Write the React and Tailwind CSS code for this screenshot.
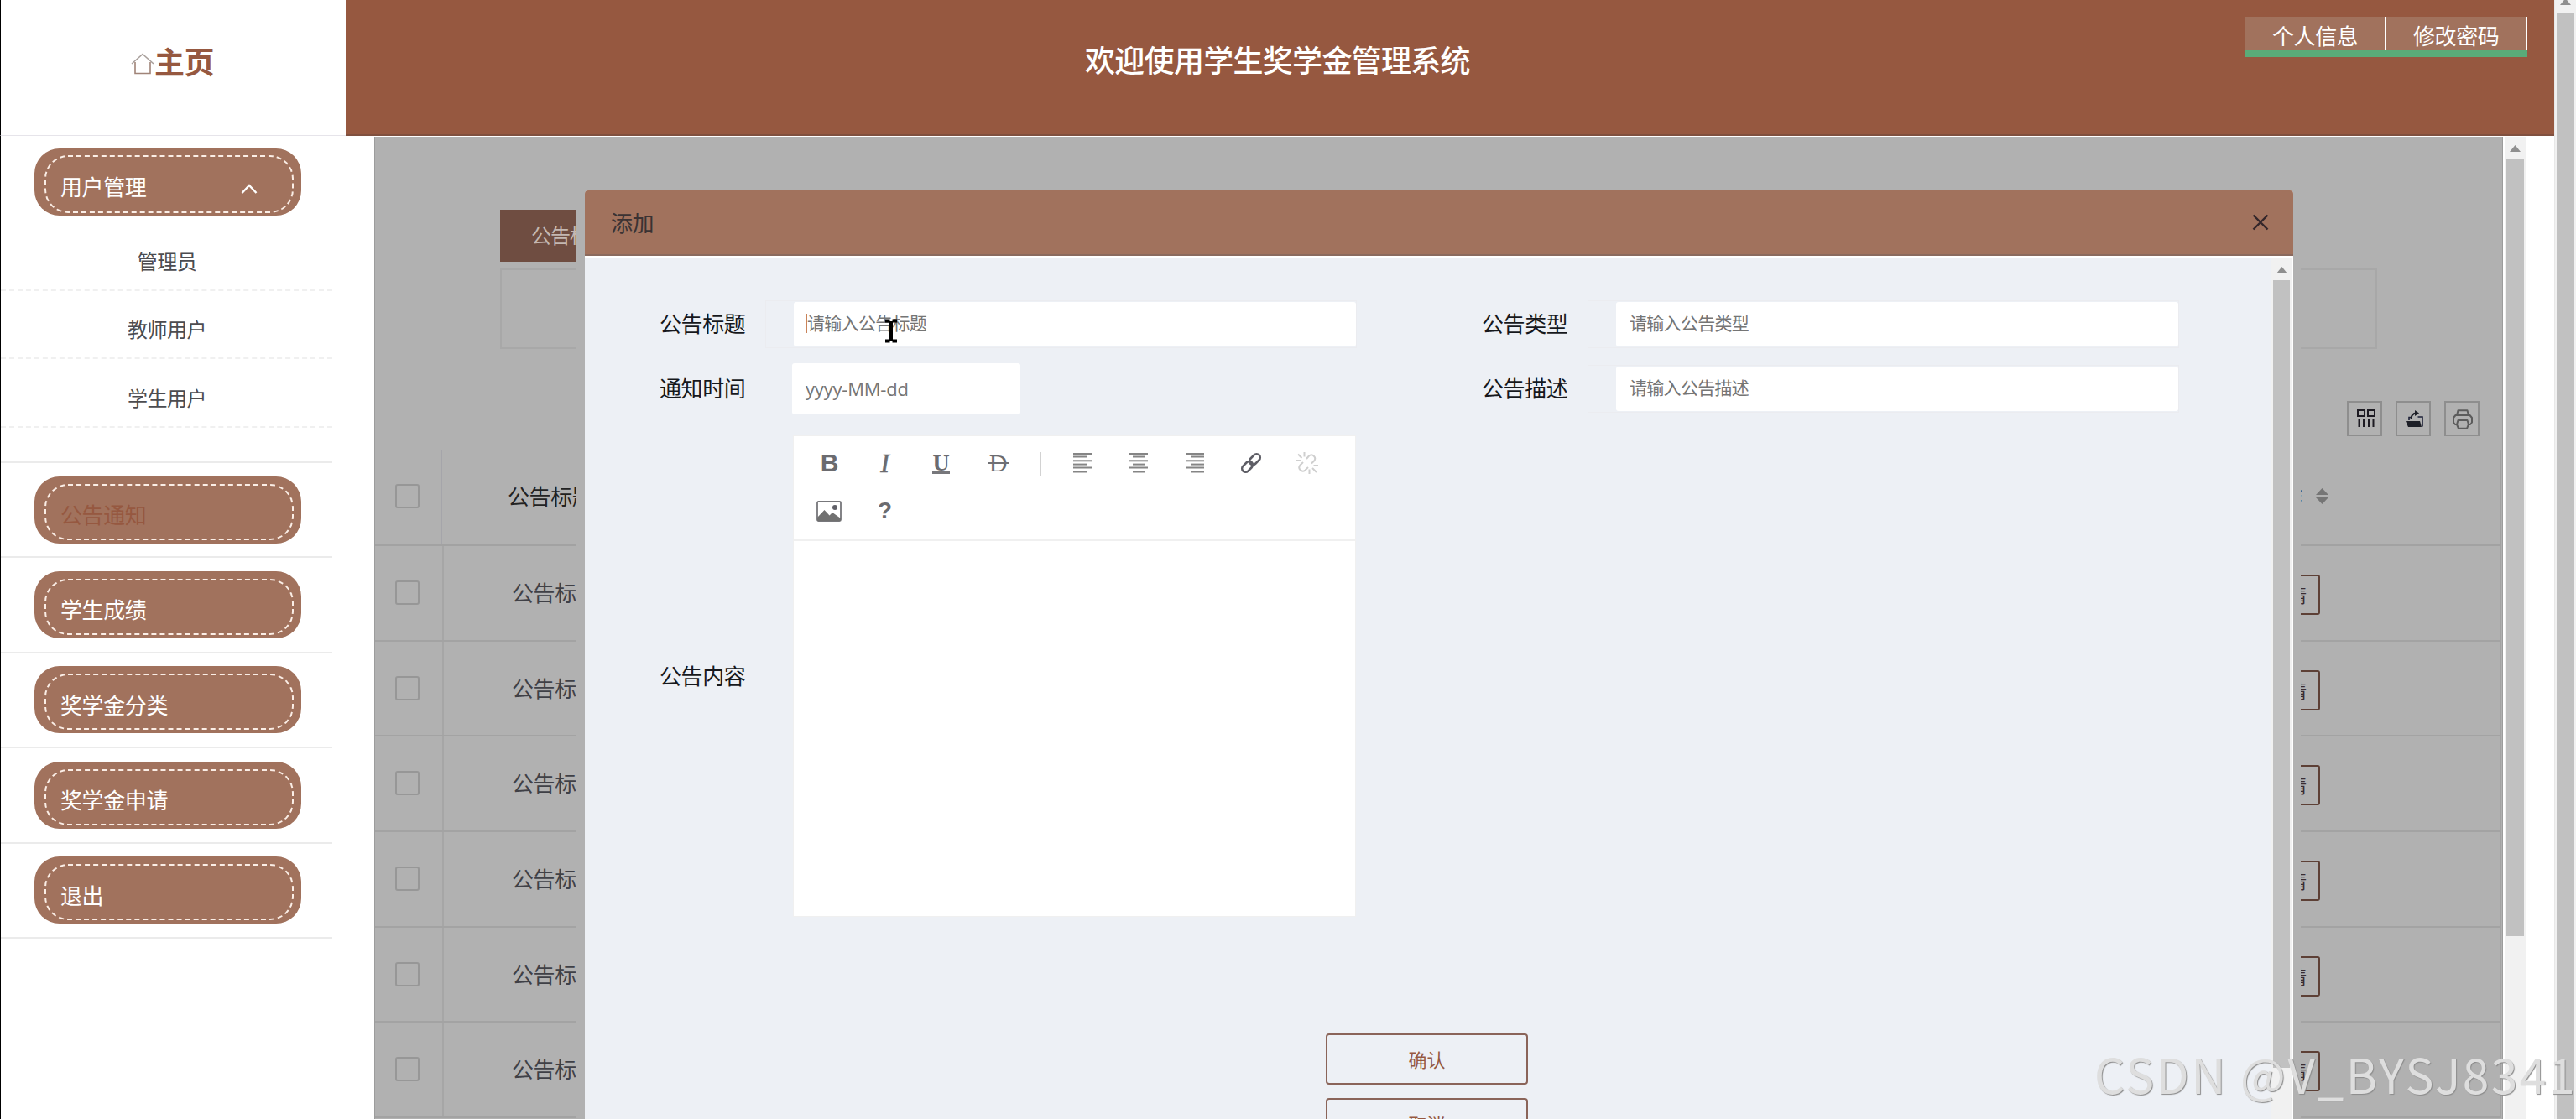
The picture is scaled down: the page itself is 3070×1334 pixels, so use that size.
import React from 'react';

const userMenus = ['管理员', '教师用户', '学生用户'];

const menus = [
  { name: '公告通知', active: true },
  { name: '学生成绩' },
  { name: '奖学金分类' },
  { name: '奖学金申请' },
  { name: '退出' },
];

const rows = [1, 2, 3, 4, 5, 6];

const HomeIcon = () => (
  <svg width="28" height="26" viewBox="0 0 28 26" fill="none" stroke="#a08478" strokeWidth="1.6">
    <path d="M1 13 L14 1.5 L27 13" stroke="#a9a09c" />
    <path d="M5 11 V24.5 H23 V11" />
  </svg>
);

const ArrowUp = () => (
  <svg width="13" height="8" viewBox="0 0 13 8" fill="#8f8f8f">
    <path d="M6.5 0 L13 8 H0 Z" />
  </svg>
);

// 左侧菜单按钮
const MenuPill = ({ name, active, open }) => (
  <div className={`ml-[40px] h-[80px] w-[318px] rounded-[30px] bg-[#a1725d] pl-[12px] pr-[9px] ${open ? 'pt-[8px]' : 'pt-[9px]'}`}>
    <div className={`flex items-center justify-between rounded-[28px] border-2 border-dashed border-[#fbeee6] pl-[17px] pr-[41px] ${open ? 'h-[69px]' : 'h-[67px]'}`}>
      <span className={`text-[26px] leading-[30px] tracking-[-0.4px] ${open ? 'pt-[4px]' : 'pt-[6px]'} ${active ? 'text-[#965840]' : 'text-white'}`}>{name}</span>
      {open && (
        <svg className="mt-[10px]" width="20" height="12" viewBox="0 0 20 12" fill="none" stroke="#fff" strokeWidth="2.4">
          <path d="M1.5 11 L10 2 L18.5 11" />
        </svg>
      )}
    </div>
  </div>
);

const Sidebar = () => (
  <div className="h-full w-[414px] shrink-0 border-l border-r border-l-black border-r-[#e9e9ee] bg-white">
    <div className="h-[390px] w-[395px] border-b-2 border-[#ebebeb] pt-[15px]">
      <MenuPill name="用户管理" open />
      <div className="pt-[8px]">
        {userMenus.map((item) => (
          <div key={item} className="flex h-[81.5px] items-center justify-center border-b-2 border-dashed border-[#f0f0f0] pl-[1px] pt-[12px] text-[24px] leading-[30px] tracking-[-0.5px] text-[#4c4c50]">
            {item}
          </div>
        ))}
      </div>
    </div>
    {menus.map((item) => (
      <div key={item.name} className="h-[113.4px] w-[395px] border-b-2 border-[#ebebeb] pt-[15.5px]">
        <MenuPill name={item.name} active={item.active} />
      </div>
    ))}
  </div>
);

const Header = () => (
  <div className="flex h-[162px] shrink-0">
    <div className="flex w-[412px] shrink-0 items-center justify-center border-b border-l border-b-[#e6e4ea] border-l-black bg-white pr-[2px]">
      <div className="flex items-center pb-[17px]">
        <span className="pt-[7px]"><HomeIcon /></span>
        <span className="text-[36px] font-bold leading-[40px] tracking-[-0.6px] text-[#965840]">主页</span>
      </div>
    </div>
    <div className="flex flex-1 border-b-2 border-[#80503f] bg-[#965840]">
      <div className="w-[881px]"></div>
      <div className="mt-[50px] w-[1383px] text-[36px] font-medium leading-[40px] tracking-[-0.7px] text-white">欢迎使用学生奖学金管理系统</div>
      <div className="mt-[20px] flex h-[48px] w-[336px] border-b-8 border-[#5aab78] bg-[#a1725d] text-[26px] leading-[44px] tracking-[-0.4px] text-white">
        <div className="w-[168px] border-r-2 border-white pl-[32px]">个人信息</div>
        <div className="w-[168px] border-r-2 border-white pl-[32px]">修改密码</div>
      </div>
    </div>
  </div>
);

const CheckBox = () => <div className="h-[29px] w-[29px] rounded-[3px] border-2 border-[#979797]"></div>;

// 公告列表
const NoticeTable = () => (
  <div className="flex h-full flex-col bg-[#b1b1b1]">
    <div className="h-[293px] pl-[149px] pt-[87px]">
      <div className="h-[62px] w-[160px] bg-[#6f4d41] pl-[37px] pt-[15px] text-[24px] leading-[30px] tracking-[-1px] text-[#c4b8b2]">公告标题</div>
      <div className="mt-[8px] h-[96px] w-[2237px] border-2 border-[#a8a8a8]"></div>
    </div>
    <div className="mr-[1px] flex h-[80px] items-center justify-end gap-[16px] border-t border-[#a2a2a2] pr-[26px] pt-[4px]">
      <div className="flex h-[42px] w-[42px] items-center justify-center border-2 border-[#8e8e8e] pl-[3px]">
        <svg width="22" height="23" viewBox="0 0 22 23" fill="none" stroke="#1d1a22" strokeWidth="2">
          <path d="M1 2 H9 V9 H1 Z M13 2 H21 V9 H13 Z" />
          <path d="M2.5 13 V22 M8 13 V22 M14 13 V22 M19.5 13 V22" />
        </svg>
      </div>
      <div className="flex h-[42px] w-[42px] items-center justify-center border-2 border-[#8e8e8e] pl-[3px] pt-[2px]">
        <svg width="21" height="21" viewBox="0 0 21 21">
          <path d="M0 13 H17 L19 20 H3 Z" fill="#1d1f27" />
          <path d="M4 12 V8.5 H7 M14.5 8 H20 V19.5" fill="none" stroke="#1d2138" strokeWidth="1.6" />
          <path d="M6.5 11 C6.5 5 9 3.5 13 3.5" fill="none" stroke="#1d1f27" strokeWidth="2" />
          <path d="M11 0 L16 3.5 L11 7 Z" fill="#1d1f27" />
        </svg>
      </div>
      <div className="flex h-[42px] w-[42px] items-center justify-center border-2 border-[#8e8e8e] pl-[2px] pt-[3px]">
        <svg width="24" height="24" viewBox="0 0 24 24" fill="none" stroke="#5c5c5c" strokeWidth="2" strokeLinejoin="round">
          <path d="M5 7 L6.5 1.2 H17.5 L19 7" />
          <path d="M5 18 H3 L1 15.5 V10 L3.5 7 H20.5 L23 10 V15.5 L21 18 H19" />
          <path d="M6.5 13 H17.5 L19 18 L17 22.8 H7 L5 18 Z" />
        </svg>
      </div>
    </div>
    <div className="mr-[1px] flex h-[115px] shrink-0 border-b-2 border-t border-r border-[#a2a2a2]">
      <div className="flex w-[80px] items-center border-r-2 border-[#a5a5aa] pb-[3px] pl-[24px]"><CheckBox /></div>
      <div className="flex flex-1 items-center justify-between pb-[4px] pl-[78px] pr-[205px] text-[26px] leading-[30px] tracking-[-0.4px] text-[#222]">
        <span>公告标题</span>
        <div className="flex items-center gap-[17px]">
          <span>操作</span>
          <svg width="15" height="19" viewBox="0 0 15 19" fill="#757575">
            <path d="M7.5 0 L15 8 H0 Z M7.5 19 L15 11 H0 Z" />
          </svg>
        </div>
      </div>
    </div>
    {rows.map((row) => (
      <div key={row} className="mr-[1px] flex h-[113.7px] shrink-0 border-b-2 border-r border-[#a3a3a3]">
        <div className="flex w-[82px] items-center border-r-2 border-[#a6a6a6] pb-[1px] pl-[24px]"><CheckBox /></div>
        <div className="flex flex-1 items-center justify-between pb-[2px] pl-[81px] pr-[215px] text-[26px] leading-[30px] tracking-[-0.4px] text-[#3f4046]">
          <span>公告标题</span>
          <div className="mt-[6px] h-[48px] rounded-[3px] border-2 border-[#5d4036] pl-[18px] pr-[14px] text-[22px] leading-[43px] tracking-[0px] text-[#3c2c30]">详情</div>
        </div>
      </div>
    ))}
  </div>
);

const lineWidths = [22, 17, 22, 17, 22, 17];
const lineTops = [1, 4.5, 9.3, 13.6, 17.5, 22.5];

const AlignIcon = ({ align }) => (
  <svg width="22" height="24" viewBox="0 0 22 24" stroke="#858585" strokeWidth="2">
    {lineWidths.map((w, i) => {
      const short = w < 22;
      const x = !short || align === 'left' ? 0 : align === 'right' ? 6 : 4;
      const len = short ? (align === 'center' ? 14 : 16) : 22;
      return <path key={i} d={`M${x} ${lineTops[i]} H${x + len}`} />;
    })}
  </svg>
);

const Tool = ({ children }) => <div className="flex h-[57px] w-[67px] items-center justify-center pb-[3px] text-[#6b6b6f]">{children}</div>;

const Editor = () => (
  <div className="h-[574px] w-[671px] border border-[#f0f0f0] bg-white">
    <div className="flex h-[125px] flex-wrap content-start border-b-2 border-[#f0f0f0] pl-[9px] pt-[5px]">
      <Tool><span className="font-['Liberation_Sans'] text-[30px] font-bold leading-[30px]">B</span></Tool>
      <Tool><span className="pr-[2px] font-['Liberation_Serif'] text-[32px] italic leading-[30px] [-webkit-text-stroke:0.6px]">I</span></Tool>
      <Tool>
        <span className="mr-[2px] h-[25px] w-[21px] border-b-3 border-[#77777b] text-center font-['Liberation_Serif'] text-[28px] font-bold leading-[23px]">U</span>
      </Tool>
      <Tool>
        <div className="relative flex w-[26px] justify-center">
          <span className="font-['Liberation_Serif'] text-[30px] leading-[30px]">D</span>
          <div className="absolute left-0 top-[14px] h-[2px] w-[26px] bg-[#707074]"></div>
        </div>
      </Tool>
      <div className="flex h-[57px] w-[33px] items-center justify-center">
        <div className="h-[29px] w-[2px] bg-[#d2d2d2]"></div>
      </div>
      <Tool><AlignIcon align="left" /></Tool>
      <Tool><AlignIcon align="center" /></Tool>
      <Tool><AlignIcon align="right" /></Tool>
      <Tool>
        <svg width="26" height="26" viewBox="0 0 26 26" fill="none" stroke="#5e5e66" strokeWidth="2.6">
          <g transform="rotate(-45 13 13)">
            <rect x="-0.5" y="8.8" width="14.5" height="8.4" rx="4.2" />
            <rect x="12" y="8.8" width="14.5" height="8.4" rx="4.2" />
          </g>
        </svg>
      </Tool>
      <Tool>
        <svg width="26" height="26" viewBox="0 0 26 26" fill="none" stroke="#cfcfcf" strokeWidth="2">
          <path d="M12 8 L15 4.5 C19 1 24.5 6.5 21 10.5 L18 13.5" />
          <path d="M8 12 L4.5 15.5 C1 19.5 6.5 25 10.5 21.5 L14 18" />
          <path d="M9.5 0 V5.5 M2 2.5 L6.5 7 M0 10 H5.5 M20.5 16 H26 M19 19 L24 24 M15.5 20.5 V26" />
        </svg>
      </Tool>
      <Tool>
        <svg className="mr-[2px]" width="30" height="25" viewBox="0 0 30 25">
          <rect x="1" y="1" width="28" height="23" rx="1.5" fill="none" stroke="#77777b" strokeWidth="1.8" />
          <path d="M1 24 V20 L9.5 11 L15.5 17.5 L19 14 L29 21 V24 Z" fill="#707070" />
          <circle cx="22" cy="8" r="3" fill="#606068" />
        </svg>
      </Tool>
      <Tool><span className="pr-[2px] font-['Liberation_Sans'] text-[28px] font-bold leading-[30px]">?</span></Tool>
    </div>
  </div>
);

const Label = ({ children }) => (
  <div className="w-[126px] shrink-0 pb-[3px] text-[26px] leading-[30px] tracking-[-0.4px] text-[#16181c]">{children}</div>
);

const Field = ({ label, placeholder, focused }) => (
  <div className="flex items-center">
    <Label>{label}</Label>
    <div className="h-[57px] w-[705px] border border-[#ebecf0] py-[1px] pl-[33px]">
      <div className="flex h-[53px] items-center rounded-[3px] bg-white pl-[14px]">
        <div className={`mb-[2px] h-[23px] w-[2px] ${focused ? 'bg-[#c9835a]' : ''}`}></div>
        <span className="pb-[5px] text-[21px] leading-[30px] tracking-[-0.7px] text-[#757575]">{placeholder}</span>
      </div>
    </div>
  </div>
);

// 添加公告弹窗
const AddModal = () => (
  <div className="flex h-full w-[2036px] flex-col rounded-t-[4px] bg-[#edf0f5]">
    <div className="flex h-[78px] shrink-0 items-center justify-between rounded-t-[4px] border-b-2 border-[#8a6a5e] bg-[#a1725d] pl-[31px] pr-[29px]">
      <span className="text-[26px] leading-[30px] tracking-[-0.4px] text-[#3b3233]">添加</span>
      <svg width="20" height="20" viewBox="0 0 20 20" stroke="#33262a" strokeWidth="2.4">
        <path d="M1.5 1.5 L18.5 18.5 M18.5 1.5 L1.5 18.5" />
      </svg>
    </div>
    <div className="flex flex-1 border-t-2 border-white">
      <div className="flex-1 pl-[89px] pt-[51px]">
        <div className="grid grid-cols-[831px_831px] gap-x-[149px]">
          <Field label="公告标题" placeholder="请输入公告标题" focused />
          <Field label="公告类型" placeholder="请输入公告类型" />
        </div>
        <div className="mt-[18px] grid h-[61px] grid-cols-[831px_831px] items-center gap-x-[149px]">
          <div className="flex items-center">
            <Label>通知时间</Label>
            <div className="ml-[32px] flex h-[61px] w-[272px] items-center rounded-[3px] bg-white pl-[16px]">
              <span className="pb-[2px] font-['Open_Sans'] text-[22px] leading-[30px] tracking-[-0.2px] text-[#757575]">yyyy-MM-dd</span>
            </div>
          </div>
          <Field label="公告描述" placeholder="请输入公告描述" />
        </div>
        <div className="mt-[25px] flex items-center">
          <Label>公告内容</Label>
          <div className="ml-[33px]"><Editor /></div>
        </div>
        <div className="ml-[794px] mt-[139px] flex flex-col gap-[16px] text-center text-[22px] leading-[56px] text-[#965840]">
          <div className="h-[61px] w-[241px] rounded-[4px] border-2 border-[#8a6459]">确认</div>
          <div className="h-[61px] w-[241px] rounded-[4px] border-2 border-[#8a6459]">取消</div>
        </div>
      </div>
      <div className="flex w-[26px] flex-col items-center border-r-2 border-white bg-[#f1f1f1] pt-[11px]">
        <ArrowUp />
        <div className="mt-[8px] h-[939px] w-[20px] bg-[#c1c1c1]"></div>
      </div>
    </div>
  </div>
);

export default function App() {
  return (
    <div className="relative flex h-[1334px] w-[3070px] overflow-hidden bg-white font-['Noto_Sans_CJK_SC',sans-serif]">
      <div className="flex w-[3044px] flex-col">
        <Header />
        <div className="flex h-[1172px]">
          <Sidebar />
          <div className="w-[32px] shrink-0"></div>
          <div className="relative mt-[1px] h-[1171px] w-[2537px] shrink-0 overflow-hidden border-l border-r border-[#9c9c9c]">
            <NoticeTable />
            <div className="absolute left-[240px] top-[64px] h-[1107px] bg-[#b1b1b1] pl-[10px] pr-[9px]">
              <AddModal />
            </div>
          </div>
          <div className="mt-[1px] flex w-[27px] flex-col items-center border-l-2 border-white bg-[#f1f1f1] pt-[10px]">
            <ArrowUp />
            <div className="mt-[9px] h-[926px] w-[21px] bg-[#c1c1c1]"></div>
          </div>
        </div>
      </div>
      <div className="flex w-[26px] flex-col items-center border-l border-[#e8e8e8] bg-[#f1f1f1] pr-[1px]">
        <div className="-mt-[2px]"><ArrowUp /></div>
        <div className="-mt-[14px] pt-[24px]">
          <div className="h-[1320px] w-[21px] bg-[#c1c1c1]"></div>
        </div>
      </div>
      {/* 鼠标光标 */}
      <svg className="absolute left-[1054px] top-[380px]" width="16" height="29" viewBox="0 0 16 29" fill="none" stroke="#000" strokeWidth="4">
        <path d="M1 2.5 H6.5 M9.5 2.5 H15 M1 26.5 H6.5 M9.5 26.5 H15 M8 3 V26" />
      </svg>
      <div className="absolute left-[2496px] top-[1249px] whitespace-nowrap text-[57px] font-normal leading-[60px] tracking-[2.4px] text-[#dedede] [text-shadow:1px_1px_1px_#8c8c8c]">CSDN @V_BYSJ8341</div>
    </div>
  );
}
